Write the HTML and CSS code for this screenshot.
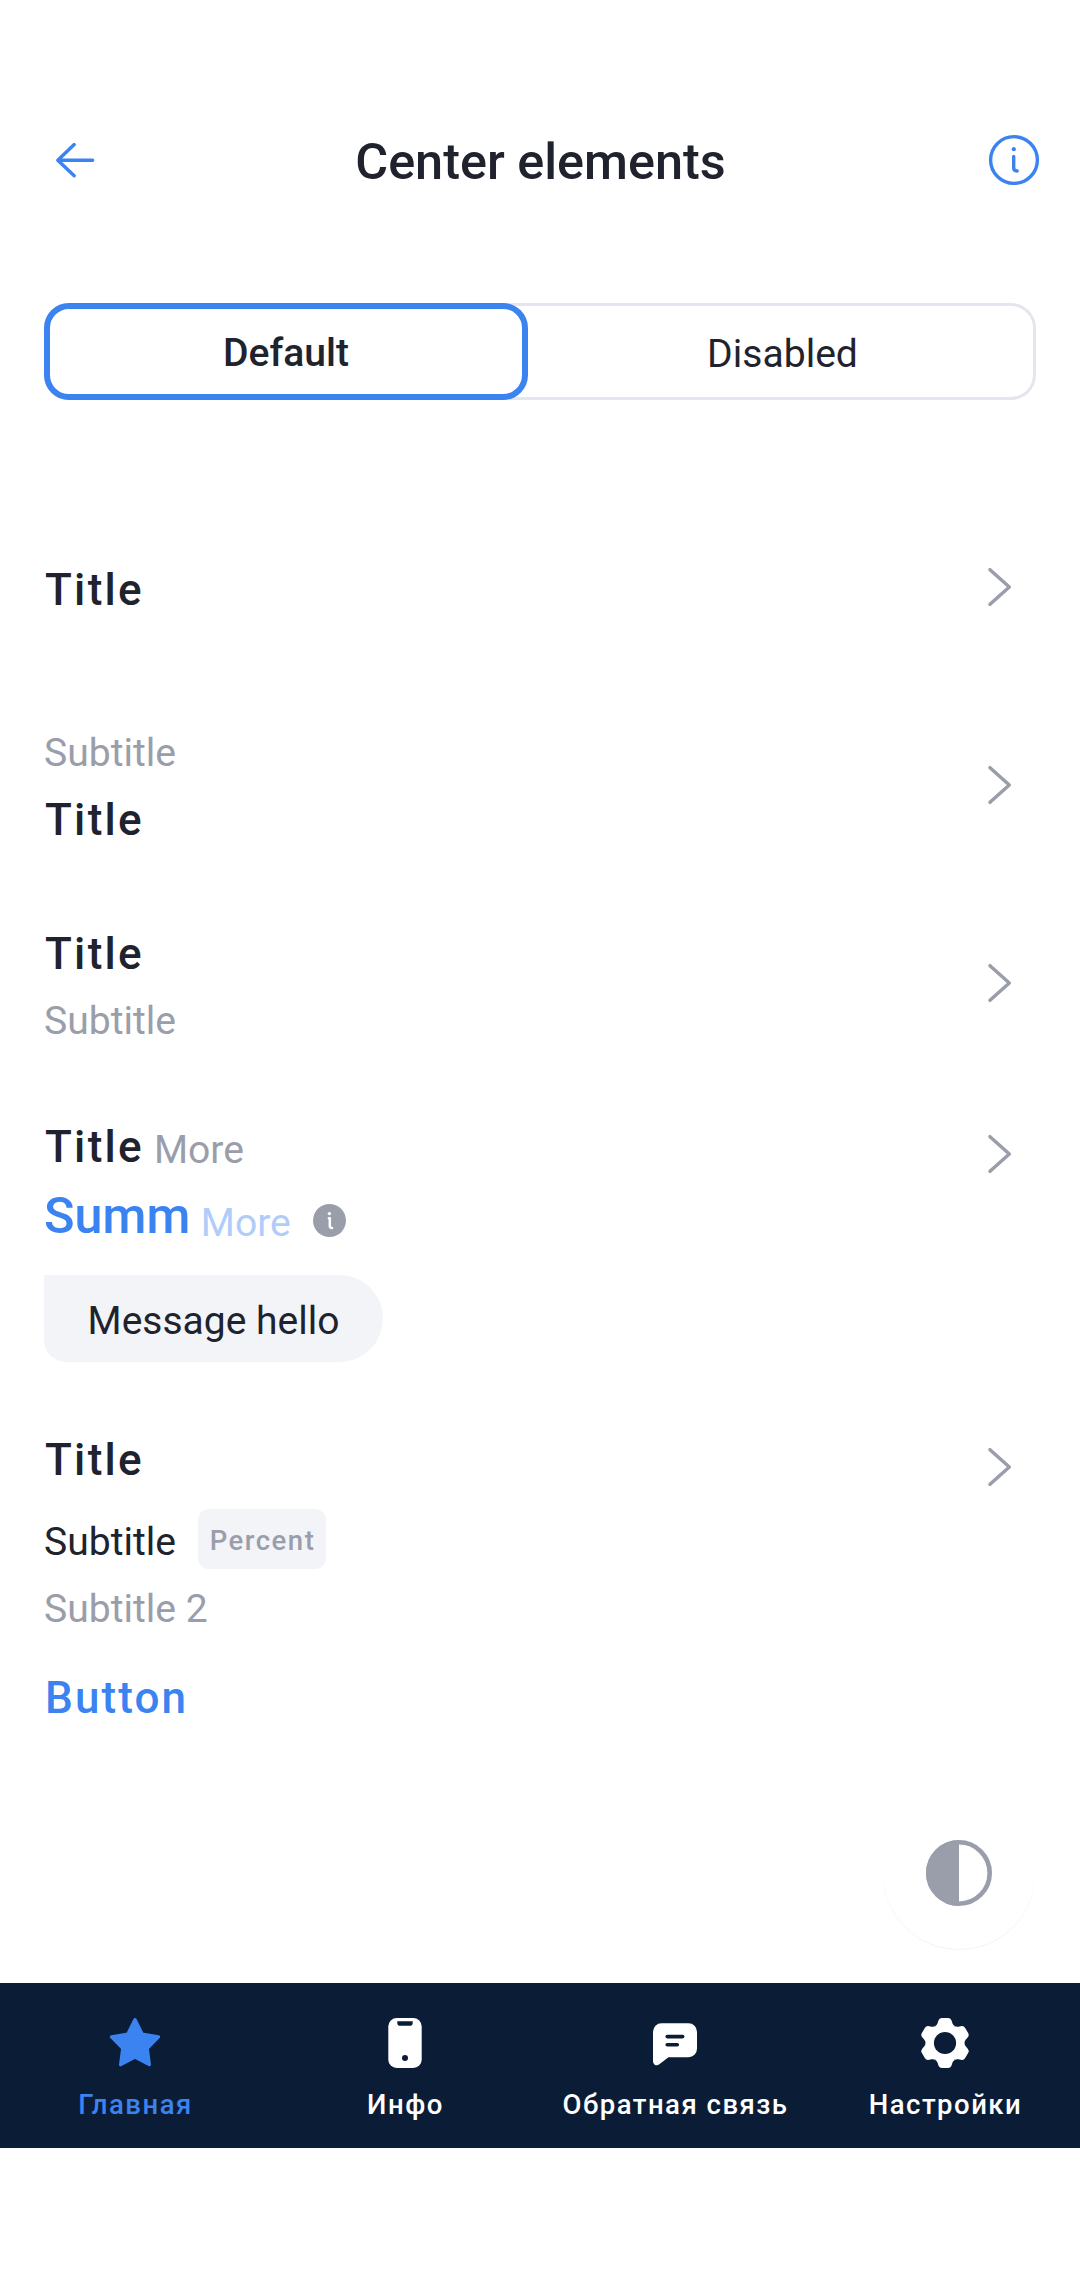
FILE: index.html
```html
<!DOCTYPE html>
<html lang="ru">
<head>
<meta charset="utf-8">
<title>Center elements</title>
<link rel="stylesheet" href="styles.css">
</head>
<body>
<svg class="defs" width="0" height="0">
  <symbol id="chevron" viewBox="0 0 66 66"><path d="M20 15.7 39.3 33 20 50.3" fill="none" stroke="currentColor" stroke-width="3.5" stroke-linecap="round" stroke-linejoin="round"/></symbol>
</svg>
<main class="screen">
  <header class="header">
    <svg class="icon header-icon" viewBox="0 0 66 66"><path d="M32.2 17.6 15.8 33.2 32.2 48.8M15.8 33.2H50.6" fill="none" stroke="currentColor" stroke-width="3.4" stroke-linecap="round" stroke-linejoin="round"/></svg>
    <h1 class="header-title">Center elements</h1>
    <svg class="icon header-icon" viewBox="0 0 66 66"><g fill="none" stroke="currentColor" stroke-width="3.4" stroke-linecap="round"><circle cx="33" cy="33" r="23.4"/><path d="M32.7 29.5V40.8Q32.7 44 36.2 44"/></g><circle cx="32.8" cy="22.2" r="2.1" fill="currentColor"/></svg>
  </header>

  <div class="segmented">
    <div class="segment segment-active">Default</div>
    <div class="segment">Disabled</div>
  </div>

  <section class="list">
    <article class="row">
      <div class="content"><div class="title">Title</div></div>
      <svg class="icon chevron"><use href="#chevron"/></svg>
    </article>
    <article class="row row-subtitle-first">
      <div class="content"><div class="subtitle">Subtitle</div><div class="title">Title</div></div>
      <svg class="icon chevron"><use href="#chevron"/></svg>
    </article>
    <article class="row row-subtitle-last">
      <div class="content"><div class="title">Title</div><div class="subtitle">Subtitle</div></div>
      <svg class="icon chevron"><use href="#chevron"/></svg>
    </article>
    <article class="row row-message">
      <div class="content">
        <div class="line"><span class="title">Title</span><span class="subtitle more">More</span></div>
        <div class="line sum-line">
          <span class="sum">Summ</span><span class="subtitle more-light">More</span>
          <svg class="info-badge" viewBox="0 0 33 33"><circle cx="16.5" cy="16.5" r="16.5" fill="#9a9eaa"/><circle cx="16.4" cy="9.6" r="1.7" fill="#fff"/><path d="M15.9 14.2H16.8V21.8Q16.8 24 19 24" fill="none" stroke="#fff" stroke-width="2.5" stroke-linecap="round" stroke-linejoin="round"/></svg>
        </div>
        <div class="message">Message hello</div>
      </div>
      <svg class="icon chevron"><use href="#chevron"/></svg>
    </article>
    <article class="row row-percent">
      <div class="content">
        <div class="title">Title</div>
        <div class="line percent-line"><span class="subtitle dark">Subtitle</span><span class="chip">Percent</span></div>
        <div class="subtitle second">Subtitle 2</div>
        <div class="title button">Button</div>
      </div>
      <svg class="icon chevron"><use href="#chevron"/></svg>
    </article>
  </section>

  <div class="fab">
    <svg class="icon" viewBox="0 0 66 66"><circle cx="33" cy="33" r="30.7" fill="none" stroke="currentColor" stroke-width="4.6"/><path d="M33 0A33 33 0 0 0 33 66Z" fill="currentColor"/></svg>
  </div>
</main>

<nav class="tabs">
  <div class="tab tab-active">
    <svg class="icon" viewBox="0 0 66 66"><path d="M33 9.7 40.1 24.1 56.4 26.9 45.2 38.4 47.3 54.6 33 47 18.7 54.6 20.8 38.4 9.6 26.9 25.9 24.1Z" fill="currentColor" stroke="currentColor" stroke-width="3.4" stroke-linejoin="round"/></svg>
    <span>Главная</span>
  </div>
  <div class="tab">
    <svg class="icon" viewBox="0 0 66 66"><rect x="16.3" y="8" width="33.4" height="50" rx="8.5" fill="currentColor"/><path d="M25.3 11.3H40.7V12.9Q40.7 15.7 37.9 15.7H28.1Q25.3 15.7 25.3 12.9Z" fill="#0b1d36"/><circle cx="33" cy="48" r="3" fill="#0b1d36"/></svg>
    <span>Инфо</span>
  </div>
  <div class="tab">
    <svg class="icon" viewBox="0 0 66 66"><path d="M19.5 13.3H46.5A8.5 8.5 0 0 1 55 21.8V38.8A8.5 8.5 0 0 1 46.5 47.3H26.5L17 54.6Q14.8 56 12.7 54.8Q11 53.7 11 51.3V21.8A8.5 8.5 0 0 1 19.5 13.3Z" fill="currentColor"/><path d="M25.2 26.6H40.7M25.2 34.8H35.3" stroke="#0b1d36" stroke-width="3.6" stroke-linecap="round"/></svg>
    <span>Обратная связь</span>
  </div>
  <div class="tab">
    <svg class="icon" viewBox="-33 -33 66 66"><defs><path id="tooth" d="M-9.8 -16.9Q-8.2 -17.6 -7.4 -19.8L-6.7 -22Q-5.8 -25 -3 -25H3Q5.8 -25 6.7 -22L7.4 -19.8Q8.2 -17.6 9.8 -16.9L0 0Z"/></defs><g fill="currentColor"><circle r="18.5"/><use href="#tooth"/><use href="#tooth" transform="rotate(60)"/><use href="#tooth" transform="rotate(120)"/><use href="#tooth" transform="rotate(180)"/><use href="#tooth" transform="rotate(240)"/><use href="#tooth" transform="rotate(300)"/></g><circle r="11.1" fill="#0b1d36"/></svg>
    <span>Настройки</span>
  </div>
</nav>
</body>
</html>
```
FILE: styles.css
```css
* { box-sizing: border-box; }
body {
  margin: 0;
  min-height: 2280px;
  background: #fff;
  color: #20232d;
  font-family: Roboto, "Noto Sans", sans-serif;
}
.defs { display: block; }
.icon { display: block; flex: none; width: 66px; height: 66px; }

.screen { position: relative; height: 1983px; padding-top: 83px; }

.header {
  display: flex;
  align-items: center;
  height: 154px;
  padding: 0 33px 0 42px;
}
.header-icon { color: #3a83f1; }
.header-title {
  flex: 1;
  margin: 0;
  padding: 4px 8px 0 0;
  text-align: center;
  font-size: 50.4px;
  line-height: 66px;
  font-weight: 500;
}

.segmented {
  display: grid;
  grid-template-columns: 484px 1fr;
  grid-template-rows: 97px;
  margin: 66px 44px 0;
  border-radius: 25px;
  box-shadow: inset 0 0 0 3px #e3e6ee;
}
.segment {
  padding: 5px 0 0 1px;
  text-align: center;
  font-size: 39.1px;
  line-height: 92px;
}
.segment-active {
  padding: 4px 0 0;
  border: 6px solid #3a83f1;
  border-radius: 25px;
  background: #fff;
  font-weight: 500;
  line-height: 81px;
}

.list { margin: 88px 44px 0; }
.row {
  display: flex;
  align-items: center;
  justify-content: space-between;
  height: 198px;
}
.chevron { color: #9a9eaa; }
.line { display: flex; }
.title {
  padding-left: 1px;
  font-size: 44px;
  line-height: 60px;
  font-weight: 500;
  letter-spacing: 2.3px;
}
.subtitle {
  font-size: 39.1px;
  line-height: 52px;
  color: #9a9eaa;
}
.row:first-child .content { padding-top: 6px; }
.row-subtitle-first .content { padding-top: 6px; }
.row-subtitle-first .title { margin-top: 11px; }
.row-subtitle-last .content { padding-top: 5px; }
.row-subtitle-last .subtitle { margin-top: 11px; }

.row-message { height: 314px; align-items: flex-start; padding-top: 35px; }
.row-message .chevron { margin-top: 4px; }
.more { margin: 7px 0 0 10px; }
.sum-line { height: 66px; margin-top: 6px; }
.sum {
  color: #3a83f1;
  font-size: 50.4px;
  line-height: 66px;
  font-weight: 500;
}
.more-light { margin: 14px 0 0 10.5px; color: #b0cdfa; }
.info-badge { width: 33px; height: 33px; margin: 21px 0 0 22px; }
.message {
  width: 339px;
  height: 87px;
  margin-top: 26px;
  padding: 5px 0 0;
  border-radius: 0 43.5px 43.5px 22px;
  background: #f3f4f8;
  font-size: 39px;
  line-height: 83px;
  text-align: center;
}

.row-percent { height: 364px; align-items: flex-start; padding-top: 34px; }
.row-percent .chevron { margin-top: 4px; }
.percent-line { height: 60px; margin-top: 19px; gap: 22px; }
.dark { padding-top: 7px; color: #20232d; }
.chip {
  width: 128px;
  height: 60px;
  padding: 3px 0 0 1px;
  border-radius: 11px;
  background: #f3f4f8;
  color: #9a9eaa;
  font-size: 27.5px;
  line-height: 57px;
  font-weight: 500;
  letter-spacing: 1.5px;
  text-align: center;
}
.second { margin-top: 14px; }
.button { margin-top: 33px; color: #3a83f1; letter-spacing: 2.1px; }

.fab {
  position: absolute;
  right: 45px;
  bottom: 34px;
  display: flex;
  align-items: center;
  justify-content: center;
  width: 152px;
  height: 152px;
  border-radius: 50%;
  background: #fff;
  box-shadow: 0 1px 1px rgba(0, 0, 0, .05);
  color: #9a9eaa;
}

.tabs {
  display: grid;
  grid-template-columns: repeat(4, 1fr);
  height: 165px;
  background: #0b1d36;
  color: #fff;
}
.tab {
  display: flex;
  flex-direction: column;
  align-items: center;
  padding-top: 27px;
  font-size: 27.5px;
  line-height: 36px;
  font-weight: 500;
  letter-spacing: 1.5px;
}
.tab span { margin-top: 11px; padding-left: 1px; white-space: nowrap; }
.tab-active { color: #3a83f1; }
```
